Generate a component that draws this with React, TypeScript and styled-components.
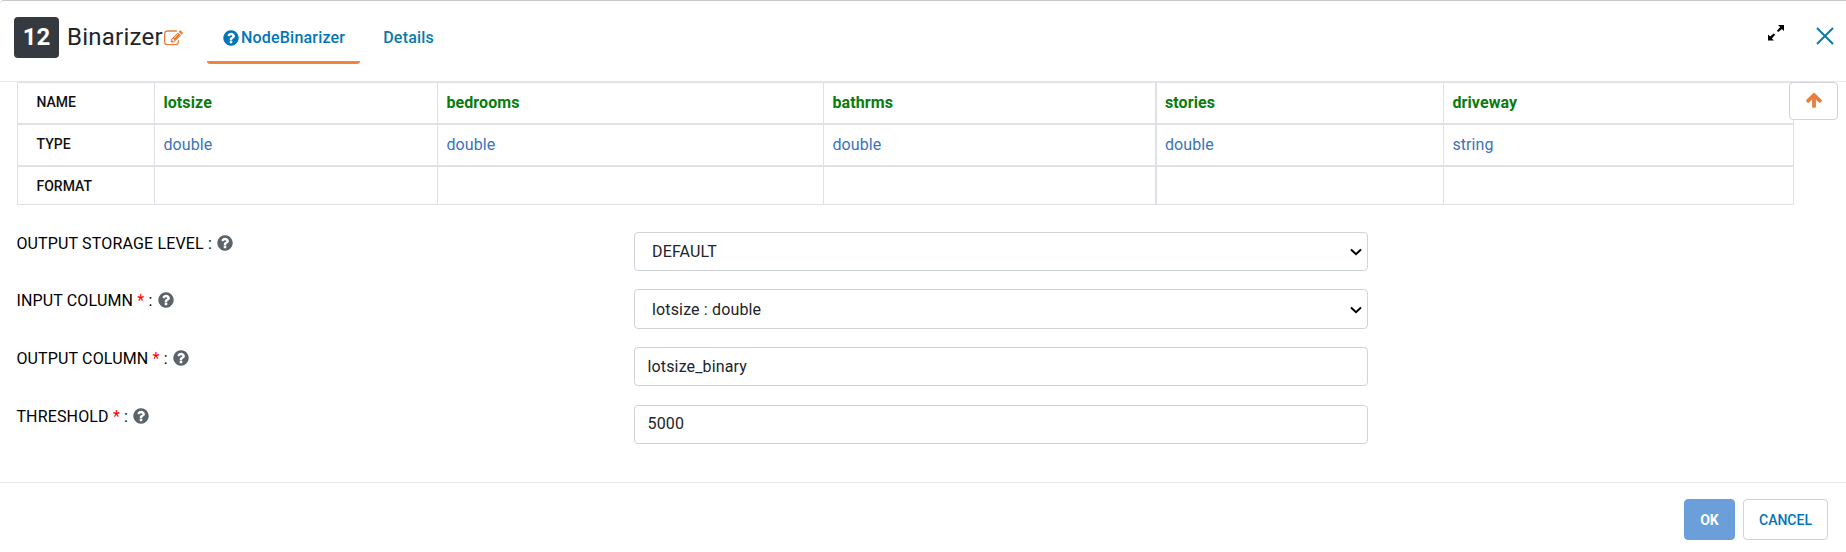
import React from "react";
import styled, { createGlobalStyle } from "styled-components";

const Global = createGlobalStyle`
  *, *::before, *::after { box-sizing: border-box; }
  body { margin: 0; background: #fff; color: #000; font: 400 16px/24px Roboto, sans-serif; }
`;

const Dialog = styled.div`
  width: 100%;
  height: 552px;
  display: flex;
  flex-direction: column;
  border-top: 1px solid #c8c8c8;
  border-top-left-radius: 4px;
`;

const Header = styled.header`
  flex: none;
  height: 81px;
  display: flex;
  align-items: flex-start;
  padding: 16px 11px 0 14px;
  border-bottom: 1px solid #e5e8eb;
`;

const NodeNumber = styled.span`
  width: 45px;
  height: 41px;
  border-radius: 4px;
  background: #343a40;
  color: #fff;
  font-size: 24px;
  font-weight: 700;
  line-height: 41px;
  text-align: center;
`;

const Title = styled.h1`
  width: 97px;
  margin: 0 0 0 8px;
  color: #212529;
  font-size: 24px;
  font-weight: 400;
  letter-spacing: 0.25px;
  line-height: 41px;
`;

const Glyph = styled.svg<{ $size: number; $color: string }>`
  display: block;
  flex: none;
  width: ${(p) => p.$size}px;
  height: ${(p) => p.$size}px;
  fill: ${(p) => p.$color};
`;

const EditButton = styled.span`
  padding-top: 12px;
`;

const Tabs = styled.nav`
  display: flex;
  margin-left: 24px;
`;

const Tab = styled.a<{ $active?: boolean }>`
  height: 47px;
  display: flex;
  align-items: center;
  gap: 1px;
  padding: 0 15px 2px;
  border-bottom: 3px solid ${(p) => (p.$active ? "#f5813f" : "transparent")};
  border-radius: 3px;
  color: ${(p) => (p.$active ? "#0275b8" : "#0b7aa8")};
  font-weight: 500;
  letter-spacing: 0.2px;
  & + & { margin-left: 8px; }
`;

const WindowActions = styled.div`
  display: flex;
  margin-left: auto;
  gap: 31px;
  padding-top: 8px;
`;

const Body = styled.main`
  flex: 1;
  display: flex;
  flex-direction: column;
  position: relative;
`;

const Schema = styled.div`
  width: 1777px;
  margin-left: 17px;
  border: solid #dee2e6;
  border-width: 1px 1px 0 0;
`;

const SchemaRow = styled.div<{ $height: number }>`
  display: grid;
  grid-template-columns: 137px 283px 386px 332px 288px 1fr;
  height: ${(p) => p.$height}px;
  border-bottom: 1px solid #dee2e6;
  & + & { border-top: 1px solid #dee2e6; }
`;

const Cell = styled.div<{ $kind: "name" | "type"; $thick?: boolean }>`
  padding: 8px 0 0 ${(p) => (p.$thick ? 8 : 8.4)}px;
  border-left: ${(p) => (p.$thick ? 2 : 1)}px solid #dee2e6;
  color: ${(p) => (p.$kind === "name" ? "#0a7c0a" : "#3b73b9")};
  font-weight: ${(p) => (p.$kind === "name" ? 700 : 400)};
  letter-spacing: 0.1px;
`;

const HeadCell = styled.div`
  padding: 7px 0 0 18.5px;
  border-left: 1px solid #dee2e6;
  color: #111;
  font-size: 14px;
  font-weight: 500;
`;

const ScrollTop = styled.button`
  position: absolute;
  top: 0;
  right: 8px;
  width: 49px;
  height: 38px;
  display: grid;
  place-items: center;
  padding: 0 0 2px;
  border: 1px solid #ced4da;
  border-radius: 4px;
  background: #fff;
`;

const Form = styled.form`
  display: grid;
  grid-template-rows: 57px 58px 58px 58px;
  margin-top: 27px;
  letter-spacing: 0.15px;
`;

const Field = styled.div`
  display: grid;
  grid-template-columns: 617.6px 734px;
  align-items: start;
  padding-left: 16.4px;
`;

const Label = styled.label`
  display: flex;
  align-items: center;
  letter-spacing: 0.16px;
  white-space: pre;
  & > svg { margin-bottom: 3px; }
`;

const Required = styled.span`
  color: #f00;
`;

const Control = styled.div<{ $select?: boolean; $height: number; $nudge?: number }>`
  height: ${(p) => p.$height}px;
  display: flex;
  align-items: center;
  justify-content: space-between;
  padding: ${(p) => Math.max(0, p.$nudge ?? 0)}px 5px ${(p) => Math.max(0, -(p.$nudge ?? 0))}px
    ${(p) => (p.$select ? 17 : 12.5)}px;
  border: 1px solid #ced4da;
  border-radius: 4px;
  color: #212529;
`;

const Footer = styled.footer`
  flex: none;
  height: 70px;
  display: flex;
  justify-content: flex-end;
  gap: 8px;
  padding: 16px 18px 0 0;
  border-top: 1px solid #e5e8eb;
`;

const Button = styled.button<{ $primary?: boolean }>`
  width: ${(p) => (p.$primary ? 51 : 85)}px;
  height: 41px;
  padding: 0;
  border: 1px solid ${(p) => (p.$primary ? "#6a9fd9" : "#ced4da")};
  border-radius: 4px;
  background: ${(p) => (p.$primary ? "#6a9fd9" : "#fff")};
  color: ${(p) => (p.$primary ? "#fff" : "#0275b8")};
  font: ${(p) => (p.$primary ? 700 : 500)} 14px Roboto, sans-serif;
`;

const QUESTION =
  "M1024 1376v-192q0-14-9-23t-23-9h-192q-14 0-23 9t-9 23v192q0 14 9 23t23 9h192q14 0 23-9t9-23zm256-672q0-88-55.5-163t-138.5-116-170-41q-243 0-371 213-15 24 8 42l132 100q7 6 19 6 16 0 25-12 53-68 86-92 34-24 86-24 48 0 85.5 26t37.5 59q0 38-20 61t-68 45q-63 28-115.5 86.5t-52.5 125.5v36q0 14 9 23t23 9h192q14 0 23-9t9-23q0-19 21.5-49.5t54.5-49.5q32-18 49-28.5t46-35 44.5-48 28-60.5 12.5-81zm384 192q0 209-103 385.5t-279.5 279.5-385.5 103-385.5-103-279.5-279.5-103-385.5 103-385.5 279.5-279.5 385.5-103 385.5 103 279.5 279.5 103 385.5z";
const EDIT =
  "M888 1184l116-116-152-152-116 116v56h96v96h56zm440-720q-16-16-33 1l-350 350q-17 17-1 33t33-1l350-350q17-17 1-33zm80 594v190q0 119-84.5 203.5t-203.5 84.5h-832q-119 0-203.5-84.5t-84.5-203.5v-832q0-119 84.5-203.5t203.5-84.5h832q63 0 117 25 15 7 18 23 3 17-9 29l-49 49q-14 14-32 8-23-6-45-6h-832q-66 0-113 47t-47 113v832q0 66 47 113t113 47h832q66 0 113-47t47-113v-126q0-13 9-22l64-64q15-15 35-7t20 29zm-96-738l288 288-672 672h-288v-288zm444 132l-92 92-288-288 92-92q28-28 68-28t68 28l152 152q28 28 28 68t-28 68z";
const ARROW_UP =
  "M1675 971q0 51-37 90l-75 75q-38 38-91 38-54 0-90-38l-294-293v704q0 52-37.5 84.5t-90.5 32.5h-128q-53 0-90.5-32.5t-37.5-84.5v-704l-294 293q-36 38-90 38t-90-38l-75-75q-38-38-38-90 0-53 38-91l651-651q35-37 90-37 54 0 91 37l651 651q37 39 37 91z";

const FaGlyph = ({ d, size, color }: { d: string; size: number; color: string }) => (
  <Glyph viewBox="0 0 1792 1792" $size={size} $color={color}>
    <path d={d} />
  </Glyph>
);

const columns = [
  { name: "lotsize", type: "double" },
  { name: "bedrooms", type: "double" },
  { name: "bathrms", type: "double" },
  { name: "stories", type: "double", thick: true },
  { name: "driveway", type: "string" },
];

const fields = [
  { label: "OUTPUT STORAGE LEVEL", value: "DEFAULT", select: true, height: 39 },
  { label: "INPUT COLUMN", value: "lotsize : double", select: true, required: true, height: 40, nudge: 2 },
  { label: "OUTPUT COLUMN", value: "lotsize_binary", required: true, height: 39 },
  { label: "THRESHOLD", value: "5000", required: true, height: 39, nudge: -2 },
];

export default function App() {
  return (
    <>
      <Global />
      <Dialog>
        <Header>
          <NodeNumber>12</NodeNumber>
          <Title>Binarizer</Title>
          <EditButton>
            <FaGlyph d={EDIT} size={19} color="#e5803f" />
          </EditButton>
          <Tabs>
            <Tab $active>
              <FaGlyph d={QUESTION} size={18} color="#0275b8" />
              NodeBinarizer
            </Tab>
            <Tab>Details</Tab>
          </Tabs>
          <WindowActions>
            <Glyph viewBox="0 0 16 16" $size={16} $color="#000">
              <path d="M10 0H16v6L13.9 3.900 10.300 7.100 8.900 5.700 12.100 2.100zM6 15.500H0V9.500L2.100 11.600 5.700 8.400 7.100 9.800 3.900 13.400z" />
            </Glyph>
            <Glyph viewBox="0 0 20 20" $size={20} $color="none">
              <path d="M2 3L18 19M18 3L2 19" stroke="#0b7aa8" strokeWidth="2" />
            </Glyph>
          </WindowActions>
        </Header>
        <Body>
          <Schema>
            <SchemaRow $height={41}>
              <HeadCell>NAME</HeadCell>
              {columns.map((c) => (
                <Cell key={c.name} $kind="name" $thick={c.thick}>{c.name}</Cell>
              ))}
            </SchemaRow>
            <SchemaRow $height={42}>
              <HeadCell>TYPE</HeadCell>
              {columns.map((c) => (
                <Cell key={c.name} $kind="type" $thick={c.thick}>{c.type}</Cell>
              ))}
            </SchemaRow>
            <SchemaRow $height={39}>
              <HeadCell>FORMAT</HeadCell>
              {columns.map((c) => (
                <Cell key={c.name} $kind="type" $thick={c.thick} />
              ))}
            </SchemaRow>
          </Schema>
          <ScrollTop>
            <FaGlyph d={ARROW_UP} size={18} color="#e5803f" />
          </ScrollTop>
          <Form>
            {fields.map((f) => (
              <Field key={f.label}>
                <Label>
                  {f.label + " "}
                  {f.required && <Required>* </Required>}
                  {": "}
                  <FaGlyph d={QUESTION} size={18} color="#5b636b" />
                </Label>
                <Control $select={f.select} $height={f.height} $nudge={f.nudge}>
                  {f.value}
                  {f.select && (
                    <Glyph viewBox="0 0 12 12" $size={12} $color="none">
                      <path d="M1 3.500L6 8.200L11 3.500" stroke="#000" strokeWidth="2" />
                    </Glyph>
                  )}
                </Control>
              </Field>
            ))}
          </Form>
        </Body>
        <Footer>
          <Button $primary>OK</Button>
          <Button>CANCEL</Button>
        </Footer>
      </Dialog>
    </>
  );
}
